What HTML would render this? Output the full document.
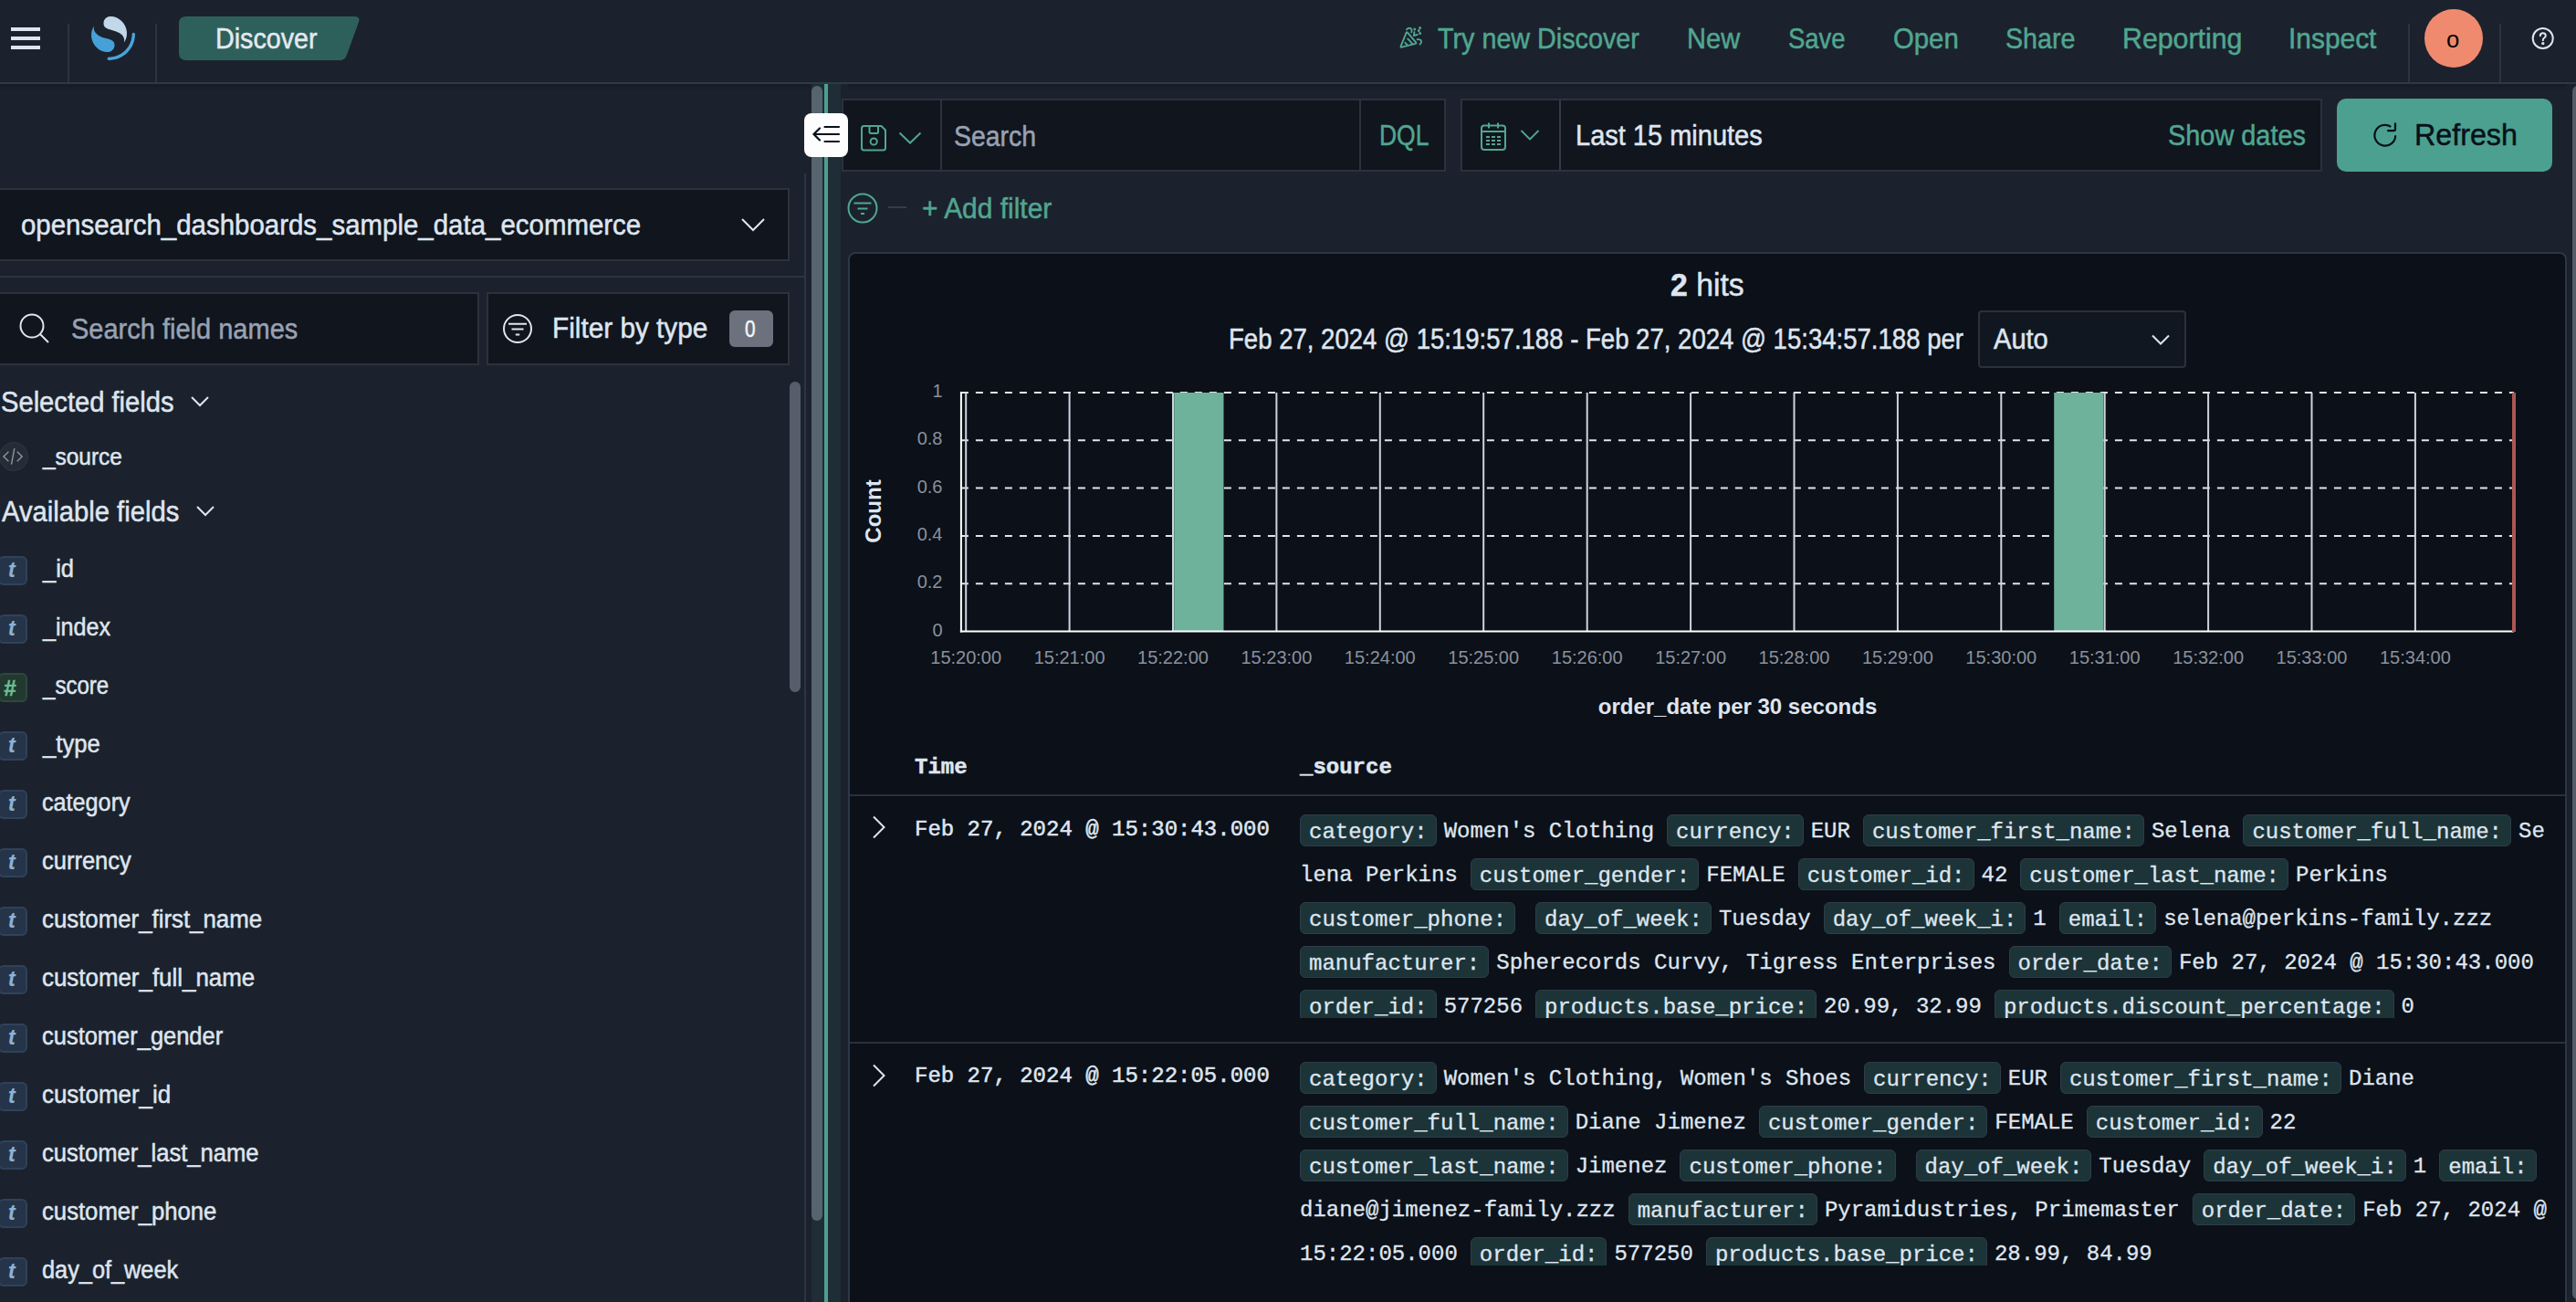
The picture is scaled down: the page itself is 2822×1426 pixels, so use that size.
<!DOCTYPE html>
<html><head><meta charset="utf-8"><title>Discover</title>
<style>
html,body{margin:0;padding:0;}
body{width:2822px;height:1426px;overflow:hidden;background:#1b222d;position:relative;font-family:"Liberation Sans",sans-serif;}
.a{position:absolute;}
.t{position:absolute;white-space:pre;line-height:1;transform-origin:0 0;-webkit-text-stroke:0.5px currentColor;}
svg{position:absolute;overflow:visible;}
.m{position:absolute;white-space:pre;font-family:"Liberation Mono",monospace;font-size:24px;line-height:48px;color:#dfe5ef;height:48px;-webkit-text-stroke:0.3px currentColor;}
.m b{font-weight:400;display:inline-block;background:#1c3438;border:1px solid #2e3c48;border-radius:6px;padding:0 9px;height:35px;box-sizing:border-box;line-height:37px;vertical-align:top;margin-top:5px;margin-right:8px;}
.m i{font-style:normal;margin-right:14px;}
</style></head><body>

<div class="a" style="left:0px;top:0px;width:2822px;height:90px;background:#1b222d;"></div>
<div class="a" style="left:0px;top:90px;width:2822px;height:2px;background:#2f3947;"></div>
<div class="a" style="left:0px;top:92px;width:2822px;height:8px;background:linear-gradient(rgba(0,0,0,0.18),rgba(0,0,0,0));"></div>
<div class="a" style="left:12px;top:30px;width:32px;height:4px;background:#dfe5ef;"></div>
<div class="a" style="left:12px;top:40px;width:32px;height:4px;background:#dfe5ef;"></div>
<div class="a" style="left:12px;top:50px;width:32px;height:4px;background:#dfe5ef;"></div>
<div class="a" style="left:74px;top:26px;width:2px;height:64px;background:#2b3544;"></div>
<div class="a" style="left:170px;top:26px;width:2px;height:64px;background:#2b3544;"></div>
<svg style="left:100px;top:18px" width="48" height="48" viewBox="0 0 64 64">
<path fill="#4aa3dc" d="M61.7374 23.5C60.4878 23.5 59.4748 24.513 59.4748 25.7626C59.4748 44.3813 44.3813 59.4748 25.7626 59.4748C24.513 59.4748 23.5 60.4878 23.5 61.7374C23.5 62.987 24.513 64 25.7626 64C46.8803 64 64 46.8803 64 25.7626C64 24.513 62.987 23.5 61.7374 23.5Z"/>
<path fill="#c2d8ea" d="M48.0814 38C50.2572 34.4505 52.3615 29.7178 51.9475 23.0921C51.0899 9.36725 38.6589 -1.04463 26.9206 0.0837327C22.3253 0.525465 17.6068 4.2712 18.026 10.9805C18.2082 13.8961 19.6352 15.6169 21.9544 16.9399C24.1618 18.1992 26.9978 18.9969 30.2128 19.9011C34.0962 20.9934 38.6009 22.2203 42.063 24.7717C46.2125 27.8295 49.0491 31.3743 48.0814 38Z"/>
<path fill="#47a0d8" d="M3.91861 14C1.74276 17.5495 -0.361506 22.2822 0.0524931 28.9079C0.910072 42.6327 13.3411 53.0446 25.0794 51.9163C29.6747 51.4745 34.3932 47.7288 33.974 41.0195C33.7918 38.1039 32.3647 36.3831 30.0456 35.0601C27.8382 33.8008 25.0022 33.0031 21.7872 32.0989C17.9038 31.0066 13.3991 29.7797 9.93694 27.2283C5.78746 24.1704 2.95092 20.6257 3.91861 14Z"/>
</svg>
<svg style="left:196px;top:18px" width="200" height="48" viewBox="0 0 200 48">
<path fill="#2e605b" d="M8 0 H192 Q199 0 197 6 L184 42 Q182 48 176 48 H8 Q0 48 0 40 V8 Q0 0 8 0Z"/>
</svg>
<div id="hdr_discover" class="t" style="left:236.0px;top:27px;font-size:31px;color:#e4e9f0;font-weight:400;font-family:'Liberation Sans',sans-serif;transform:scaleX(0.9246);">Discover</div>
<div id="hl0" class="t" style="left:1575.0px;top:27.299999999999997px;font-size:30.5px;color:#51a690;font-weight:400;font-family:'Liberation Sans',sans-serif;transform:scaleX(0.9422);">Try new Discover</div>
<div id="hl1" class="t" style="left:1848.0px;top:27.299999999999997px;font-size:30.5px;color:#51a690;font-weight:400;font-family:'Liberation Sans',sans-serif;transform:scaleX(0.9525);">New</div>
<div id="hl2" class="t" style="left:1959.0px;top:27.299999999999997px;font-size:30.5px;color:#51a690;font-weight:400;font-family:'Liberation Sans',sans-serif;transform:scaleX(0.8999);">Save</div>
<div id="hl3" class="t" style="left:2073.5px;top:27.299999999999997px;font-size:30.5px;color:#51a690;font-weight:400;font-family:'Liberation Sans',sans-serif;transform:scaleX(0.9610);">Open</div>
<div id="hl4" class="t" style="left:2197.0px;top:27.299999999999997px;font-size:30.5px;color:#51a690;font-weight:400;font-family:'Liberation Sans',sans-serif;transform:scaleX(0.9391);">Share</div>
<div id="hl5" class="t" style="left:2325.0px;top:27.299999999999997px;font-size:30.5px;color:#51a690;font-weight:400;font-family:'Liberation Sans',sans-serif;transform:scaleX(0.9934);">Reporting</div>
<div id="hl6" class="t" style="left:2506.5px;top:27.299999999999997px;font-size:30.5px;color:#51a690;font-weight:400;font-family:'Liberation Sans',sans-serif;transform:scaleX(0.9803);">Inspect</div>
<svg style="left:1530px;top:26px" width="32" height="32" viewBox="0 0 32 32" fill="none" stroke="#51a690" stroke-width="1.9" stroke-linecap="round" stroke-linejoin="round">
<path d="M10.7 9.6 L4.6 24.6 Q4.2 26 5.6 25.7 L20.6 21.9 Q22 21.4 21.1 20.4 L11.9 9.6 Q11.2 8.9 10.7 9.6Z"/>
<path d="M12.2 16.4 L17.4 22.2"/><path d="M9.4 20.8 L11.6 23.2"/>
<path d="M10.9 6.3 Q13.5 3.6 15.9 5.6 Q17.4 7.2 16.3 9.3"/>
<path d="M19.4 9.3 L18.8 13 L22.6 12"/>
<path d="M22.7 17.3 Q26.3 16.6 27 19.3 Q27.4 21.3 25.6 22.4"/>
<circle cx="19.7" cy="5.9" r="0.55" fill="#51a690"/><circle cx="25.6" cy="4.6" r="0.55" fill="#51a690"/><circle cx="24.3" cy="7.5" r="0.55" fill="#51a690"/><circle cx="25.6" cy="10.4" r="0.55" fill="#51a690"/>
</svg>
<div class="a" style="left:2638px;top:26px;width:2px;height:64px;background:#2b3544;"></div>
<div class="a" style="left:2738px;top:26px;width:2px;height:64px;background:#2b3544;"></div>
<div class="a" style="left:2656px;top:10px;width:64px;height:64px;border-radius:50%;background:#f08a6e"></div>
<div id="avatar_o" class="t" style="left:2680.4000000000015px;top:30px;font-size:26px;color:#000000;font-weight:400;font-family:'Liberation Sans',sans-serif;transform:scaleX(0.9895);-webkit-text-stroke:0;">o</div>
<svg style="left:2772px;top:28px" width="28" height="28" viewBox="0 0 28 28" fill="none" stroke="#dfe5ef" stroke-width="2">
<circle cx="13.7" cy="14" r="11"/><path d="M10.8 11.2 Q10.8 8.2 13.8 8.2 Q16.8 8.2 16.8 11 Q16.8 12.8 14.8 13.8 Q13.8 14.3 13.8 16.2" stroke-linecap="round"/>
<circle cx="13.8" cy="19.6" r="0.7" fill="#dfe5ef"/></svg>
<div class="a" style="left:-2px;top:206px;width:867px;height:80px;background:#10151e;border:2px solid #2b323c;box-sizing:border-box;"></div>
<div id="idx" class="t" style="left:23.0px;top:231px;font-size:31px;color:#dfe5ef;font-weight:400;font-family:'Liberation Sans',sans-serif;transform:scaleX(0.9497);">opensearch_dashboards_sample_data_ecommerce</div>
<svg style="left:810px;top:236px" width="30" height="20" viewBox="0 0 30 20" fill="none" stroke="#dfe5ef" stroke-width="2"><path d="M3 4 L15 16 L27 4"/></svg>
<div class="a" style="left:881px;top:190px;width:2px;height:1236px;background:#2b3544;"></div>
<div class="a" style="left:0px;top:302px;width:882px;height:2px;background:#2b3544;"></div>
<div class="a" style="left:-2px;top:320px;width:527px;height:80px;background:#10151e;border:2px solid #2b323c;box-sizing:border-box;"></div>
<svg style="left:20px;top:342px" width="36" height="36" viewBox="0 0 36 36" fill="none" stroke="#dfe5ef" stroke-width="2"><circle cx="15" cy="15" r="12.5"/><path d="M24 24 L33 33"/></svg>
<div id="sfn" class="t" style="left:78.0px;top:345px;font-size:31px;color:#98a2b3;font-weight:400;font-family:'Liberation Sans',sans-serif;transform:scaleX(0.9356);">Search field names</div>
<div class="a" style="left:533px;top:320px;width:332px;height:80px;background:#10151e;border:2px solid #2b323c;box-sizing:border-box;"></div>
<svg style="left:550px;top:343px" width="34" height="34" viewBox="0 0 34 34" fill="none" stroke="#dfe5ef" stroke-width="2"><circle cx="17" cy="17" r="15"/><path d="M7 11.8 H27 M10.5 17.4 H23.5 M14.8 23.4 H19.2"/></svg>
<div id="fbt" class="t" style="left:605.0px;top:344px;font-size:31px;color:#dfe5ef;font-weight:400;font-family:'Liberation Sans',sans-serif;transform:scaleX(0.9600);">Filter by type</div>
<div class="a" style="left:799px;top:340px;width:48px;height:40px;background:#6b727e;border-radius:6px;"></div>
<div id="zero" class="t" style="left:815.9999999999998px;top:347px;font-size:26px;color:#f4f6f9;font-weight:400;font-family:'Liberation Sans',sans-serif;transform:scaleX(0.8002);">0</div>
<div id="self" class="t" style="left:1.0px;top:425px;font-size:31px;color:#dfe5ef;font-weight:400;font-family:'Liberation Sans',sans-serif;transform:scaleX(0.9401);">Selected fields</div>
<svg style="left:207px;top:432px" width="24" height="16" viewBox="0 0 24 16" fill="none" stroke="#dfe5ef" stroke-width="2"><path d="M3 3 L12 12 L21 3"/></svg>
<div class="a" style="left:-1px;top:484px;width:32px;height:32px;border-radius:50%;background:#262c36;border:1px solid #303744;box-sizing:border-box"></div>
<svg style="left:0px;top:486px" width="30" height="28" viewBox="0 0 30 28" fill="none" stroke="#8c95a3" stroke-width="1.4"><path d="M9.4 8.8 L3.9 14 L9.4 19.2 M18.8 8.8 L24.2 14 L18.8 19.2 M15.8 5.2 L12.5 22.6"/></svg>
<div id="srcf" class="t" style="left:47.0px;top:487px;font-size:26px;color:#dfe5ef;font-weight:400;font-family:'Liberation Sans',sans-serif;transform:scaleX(0.9392);">_source</div>
<div id="avail" class="t" style="left:2.0px;top:545px;font-size:31px;color:#dfe5ef;font-weight:400;font-family:'Liberation Sans',sans-serif;transform:scaleX(0.9421);">Available fields</div>
<svg style="left:213px;top:552px" width="24" height="16" viewBox="0 0 24 16" fill="none" stroke="#dfe5ef" stroke-width="2"><path d="M3 3 L12 12 L21 3"/></svg>
<div class="a" style="left:-2px;top:609px;width:32px;height:32px;border-radius:6px;background:#253449;border:2px solid #2f425a;box-sizing:border-box"></div>
<div class="t" style="left:9px;top:613px;font-size:23px;font-weight:700;font-style:italic;color:#8cb2d6;-webkit-text-stroke:0.2px currentColor">t</div>
<div id="fld0" class="t" style="left:47.0px;top:610px;font-size:27px;color:#dfe5ef;font-weight:400;font-family:'Liberation Sans',sans-serif;transform:scaleX(0.9421);">_id</div>
<div class="a" style="left:-2px;top:673px;width:32px;height:32px;border-radius:6px;background:#253449;border:2px solid #2f425a;box-sizing:border-box"></div>
<div class="t" style="left:9px;top:677px;font-size:23px;font-weight:700;font-style:italic;color:#8cb2d6;-webkit-text-stroke:0.2px currentColor">t</div>
<div id="fld1" class="t" style="left:47.0px;top:674px;font-size:27px;color:#dfe5ef;font-weight:400;font-family:'Liberation Sans',sans-serif;transform:scaleX(0.9297);">_index</div>
<div class="a" style="left:-2px;top:737px;width:32px;height:32px;border-radius:6px;background:#22392f;border:2px solid #2c4a3c;box-sizing:border-box"></div>
<div class="t" style="left:4px;top:742px;font-size:24px;font-weight:700;font-style:italic;color:#6dbd94">#</div>
<div id="fld2" class="t" style="left:47.0px;top:738px;font-size:27px;color:#dfe5ef;font-weight:400;font-family:'Liberation Sans',sans-serif;transform:scaleX(0.8908);">_score</div>
<div class="a" style="left:-2px;top:801px;width:32px;height:32px;border-radius:6px;background:#253449;border:2px solid #2f425a;box-sizing:border-box"></div>
<div class="t" style="left:9px;top:805px;font-size:23px;font-weight:700;font-style:italic;color:#8cb2d6;-webkit-text-stroke:0.2px currentColor">t</div>
<div id="fld3" class="t" style="left:47.0px;top:802px;font-size:27px;color:#dfe5ef;font-weight:400;font-family:'Liberation Sans',sans-serif;transform:scaleX(0.9497);">_type</div>
<div class="a" style="left:-2px;top:865px;width:32px;height:32px;border-radius:6px;background:#253449;border:2px solid #2f425a;box-sizing:border-box"></div>
<div class="t" style="left:9px;top:869px;font-size:23px;font-weight:700;font-style:italic;color:#8cb2d6;-webkit-text-stroke:0.2px currentColor">t</div>
<div id="fld4" class="t" style="left:46.0px;top:866px;font-size:27px;color:#dfe5ef;font-weight:400;font-family:'Liberation Sans',sans-serif;transform:scaleX(0.9329);">category</div>
<div class="a" style="left:-2px;top:929px;width:32px;height:32px;border-radius:6px;background:#253449;border:2px solid #2f425a;box-sizing:border-box"></div>
<div class="t" style="left:9px;top:933px;font-size:23px;font-weight:700;font-style:italic;color:#8cb2d6;-webkit-text-stroke:0.2px currentColor">t</div>
<div id="fld5" class="t" style="left:46.0px;top:930px;font-size:27px;color:#dfe5ef;font-weight:400;font-family:'Liberation Sans',sans-serif;transform:scaleX(0.9441);">currency</div>
<div class="a" style="left:-2px;top:993px;width:32px;height:32px;border-radius:6px;background:#253449;border:2px solid #2f425a;box-sizing:border-box"></div>
<div class="t" style="left:9px;top:997px;font-size:23px;font-weight:700;font-style:italic;color:#8cb2d6;-webkit-text-stroke:0.2px currentColor">t</div>
<div id="fld6" class="t" style="left:46.0px;top:994px;font-size:27px;color:#dfe5ef;font-weight:400;font-family:'Liberation Sans',sans-serif;transform:scaleX(0.9560);">customer_first_name</div>
<div class="a" style="left:-2px;top:1057px;width:32px;height:32px;border-radius:6px;background:#253449;border:2px solid #2f425a;box-sizing:border-box"></div>
<div class="t" style="left:9px;top:1061px;font-size:23px;font-weight:700;font-style:italic;color:#8cb2d6;-webkit-text-stroke:0.2px currentColor">t</div>
<div id="fld7" class="t" style="left:46.0px;top:1058px;font-size:27px;color:#dfe5ef;font-weight:400;font-family:'Liberation Sans',sans-serif;transform:scaleX(0.9590);">customer_full_name</div>
<div class="a" style="left:-2px;top:1121px;width:32px;height:32px;border-radius:6px;background:#253449;border:2px solid #2f425a;box-sizing:border-box"></div>
<div class="t" style="left:9px;top:1125px;font-size:23px;font-weight:700;font-style:italic;color:#8cb2d6;-webkit-text-stroke:0.2px currentColor">t</div>
<div id="fld8" class="t" style="left:46.0px;top:1122px;font-size:27px;color:#dfe5ef;font-weight:400;font-family:'Liberation Sans',sans-serif;transform:scaleX(0.9431);">customer_gender</div>
<div class="a" style="left:-2px;top:1185px;width:32px;height:32px;border-radius:6px;background:#253449;border:2px solid #2f425a;box-sizing:border-box"></div>
<div class="t" style="left:9px;top:1189px;font-size:23px;font-weight:700;font-style:italic;color:#8cb2d6;-webkit-text-stroke:0.2px currentColor">t</div>
<div id="fld9" class="t" style="left:46.0px;top:1186px;font-size:27px;color:#dfe5ef;font-weight:400;font-family:'Liberation Sans',sans-serif;transform:scaleX(0.9598);">customer_id</div>
<div class="a" style="left:-2px;top:1249px;width:32px;height:32px;border-radius:6px;background:#253449;border:2px solid #2f425a;box-sizing:border-box"></div>
<div class="t" style="left:9px;top:1253px;font-size:23px;font-weight:700;font-style:italic;color:#8cb2d6;-webkit-text-stroke:0.2px currentColor">t</div>
<div id="fld10" class="t" style="left:46.0px;top:1250px;font-size:27px;color:#dfe5ef;font-weight:400;font-family:'Liberation Sans',sans-serif;transform:scaleX(0.9480);">customer_last_name</div>
<div class="a" style="left:-2px;top:1313px;width:32px;height:32px;border-radius:6px;background:#253449;border:2px solid #2f425a;box-sizing:border-box"></div>
<div class="t" style="left:9px;top:1317px;font-size:23px;font-weight:700;font-style:italic;color:#8cb2d6;-webkit-text-stroke:0.2px currentColor">t</div>
<div id="fld11" class="t" style="left:46.0px;top:1314px;font-size:27px;color:#dfe5ef;font-weight:400;font-family:'Liberation Sans',sans-serif;transform:scaleX(0.9516);">customer_phone</div>
<div class="a" style="left:-2px;top:1377px;width:32px;height:32px;border-radius:6px;background:#253449;border:2px solid #2f425a;box-sizing:border-box"></div>
<div class="t" style="left:9px;top:1381px;font-size:23px;font-weight:700;font-style:italic;color:#8cb2d6;-webkit-text-stroke:0.2px currentColor">t</div>
<div id="fld12" class="t" style="left:46.0px;top:1378px;font-size:27px;color:#dfe5ef;font-weight:400;font-family:'Liberation Sans',sans-serif;transform:scaleX(0.9375);">day_of_week</div>
<div class="a" style="left:-2px;top:1441px;width:32px;height:32px;border-radius:6px;background:#253449;border:2px solid #2f425a;box-sizing:border-box"></div>
<div class="t" style="left:9px;top:1445px;font-size:23px;font-weight:700;font-style:italic;color:#8cb2d6;-webkit-text-stroke:0.2px currentColor">t</div>
<div id="fld13" class="t" style="left:46px;top:1442px;font-size:27px;color:#dfe5ef;font-weight:400;font-family:'Liberation Sans',sans-serif;transform:scaleX(0.9419);">day_of_week_i</div>
<div class="a" style="left:865px;top:418px;width:12px;height:340px;background:#565d6b;border-radius:6px;"></div>
<div class="a" style="left:889px;top:92px;width:32px;height:1334px;background:#1e2d36;"></div>
<div class="a" style="left:889px;top:94px;width:12px;height:1243px;background:#55646e;border-radius:6px;"></div>
<div class="a" style="left:903px;top:92px;width:4px;height:1334px;background:#4ba08e;"></div>
<div class="a" style="left:921px;top:92px;width:8px;height:1334px;background:#1b222d;"></div>
<div class="a" style="left:881px;top:124px;width:48px;height:48px;border-radius:8px;background:#fdfdfe;z-index:5"></div>
<svg style="left:881px;top:124px;z-index:6" width="48" height="48" viewBox="0 0 48 48" fill="none" stroke="#07101a" stroke-width="2.2" stroke-linecap="round"><path d="M17 16.5 L10.5 23 L17 29.5 M10.5 23 H38 M22.5 15 H38 M22.5 31 H38"/></svg>
<div class="a" style="left:922px;top:108px;width:662px;height:80px;background:#10151e;border:2px solid #2b323c;box-sizing:border-box;"></div>
<div class="a" style="left:1030px;top:110px;width:2px;height:76px;background:#2b323c;"></div>
<div class="a" style="left:1489px;top:110px;width:2px;height:76px;background:#2b323c;"></div>
<svg style="left:940px;top:134px" width="34" height="34" viewBox="0 0 34 34" fill="none" stroke="#51a690" stroke-width="2" stroke-linejoin="round"><path d="M6.5 4 H25.5 L30 8.5 V28 Q30 30.5 27.5 30.5 H6.5 Q4 30.5 4 28 V6.5 Q4 4 6.5 4 Z"/><path d="M12.5 4 V10.5 Q12.5 12 14 12 H20.5 Q22 12 22 10.5 V4"/><circle cx="17.2" cy="21" r="3.6"/></svg>
<svg style="left:983px;top:142px" width="28" height="18" viewBox="0 0 28 18" fill="none" stroke="#51a690" stroke-width="2"><path d="M2.5 3.5 L14 14.5 L25.5 3.5"/></svg>
<div id="qsearch" class="t" style="left:1045.0px;top:134px;font-size:31px;color:#98a2b3;font-weight:400;font-family:'Liberation Sans',sans-serif;transform:scaleX(0.9167);">Search</div>
<div id="dql" class="t" style="left:1511.0px;top:132.5px;font-size:31px;color:#51a690;font-weight:400;font-family:'Liberation Sans',sans-serif;transform:scaleX(0.8538);">DQL</div>
<div class="a" style="left:1600px;top:108px;width:944px;height:80px;background:#10151e;border:2px solid #2b323c;box-sizing:border-box;"></div>
<div class="a" style="left:1708px;top:110px;width:2px;height:76px;background:#343b46;"></div>
<svg style="left:1620px;top:133px" width="32" height="34" viewBox="0 0 32 34" fill="none" stroke="#51a690" stroke-width="2"><rect x="3" y="4.5" width="26" height="26.5" rx="3"/><path d="M3 11 H29 M11 1.5 V7.5 M21 1.5 V7.5"/><path d="M8 17 H12 M14 17 H18 M20 17 H24 M8 21 H12 M14 21 H18 M20 21 H24 M8 25 H12 M14 25 H18 M20 25 H24" stroke-width="2"/></svg>
<svg style="left:1664px;top:140px" width="24" height="16" viewBox="0 0 24 16" fill="none" stroke="#51a690" stroke-width="1.8" stroke-linejoin="round" stroke-linecap="round"><path d="M3 3.5 L12 12.5 L21 3.5"/></svg>
<div id="last15" class="t" style="left:1726.0px;top:132.5px;font-size:31px;color:#dfe5ef;font-weight:400;font-family:'Liberation Sans',sans-serif;transform:scaleX(0.9355);">Last 15 minutes</div>
<div id="showdates" class="t" style="left:2374.5px;top:132.5px;font-size:31px;color:#51a690;font-weight:400;font-family:'Liberation Sans',sans-serif;transform:scaleX(0.9317);">Show dates</div>
<div class="a" style="left:2560px;top:108px;width:236px;height:80px;background:#4ca08f;border-radius:10px;"></div>
<svg style="left:2598px;top:132px" width="30" height="30" viewBox="0 0 30 30" fill="none" stroke="#07101a" stroke-width="2.2"><path d="M21.3 6.9 A11.4 11.4 0 1 0 26.2 16.2"/><path d="M26 2.4 V9.6 Q26 11.2 24.4 11.2 H17.2"/></svg>
<div id="refresh" class="t" style="left:2645.0px;top:129.5px;font-size:34px;color:#07101a;font-weight:400;font-family:'Liberation Sans',sans-serif;transform:scaleX(0.9483);">Refresh</div>
<svg style="left:927px;top:210px" width="36" height="36" viewBox="0 0 36 36" fill="none" stroke="#51a690" stroke-width="2"><circle cx="18" cy="18" r="15.5"/><path d="M8.5 12.5 H27.5 M12.5 18.5 H23.5 M16 24 H20"/></svg>
<div class="a" style="left:973px;top:226px;width:20px;height:2px;background:#343e4c;"></div>
<div id="addfilter" class="t" style="left:1010.0px;top:213px;font-size:31px;color:#51a690;font-weight:400;font-family:'Liberation Sans',sans-serif;transform:scaleX(0.9659);">+ Add filter</div>
<div class="a" style="left:929px;top:276px;width:1883px;height:1160px;background:#0b1019;border:2px solid #2c3747;border-radius:8px;box-sizing:border-box;"></div>
<div class="a" style="left:2812px;top:92px;width:10px;height:1334px;background:#1b222d;"></div>
<div class="a" style="left:2818px;top:94px;width:12px;height:1329px;background:#565d6a;border-radius:6px;"></div>
<div id="hits" class="t" style="left:1830.0px;top:294px;font-size:35px;color:#dfe5ef;font-weight:400;font-family:'Liberation Sans',sans-serif;transform:scaleX(0.9642);"><b>2</b> hits</div>
<div id="range" class="t" style="left:1345.5px;top:355.5px;font-size:31px;color:#dfe5ef;font-weight:400;font-family:'Liberation Sans',sans-serif;transform:scaleX(0.8887);">Feb 27, 2024 @ 15:19:57.188 - Feb 27, 2024 @ 15:34:57.188 per</div>
<div class="a" style="left:2167px;top:340px;width:228px;height:63px;background:#111721;border:2px solid #2a313c;border-radius:4px;box-sizing:border-box;"></div>
<div id="auto" class="t" style="left:2184.0px;top:355.5px;font-size:31px;color:#dfe5ef;font-weight:400;font-family:'Liberation Sans',sans-serif;transform:scaleX(0.9375);">Auto</div>
<svg style="left:2355px;top:363px" width="24" height="18" viewBox="0 0 24 18" fill="none" stroke="#dfe5ef" stroke-width="2"><path d="M3 4.5 L12 13.5 L21 4.5"/></svg>
<svg style="left:0;top:0" width="2822" height="1426" viewBox="0 0 2822 1426">
<line x1="1052.9" y1="430.0" x2="2754.0" y2="430.0" stroke="#dfe5ee" stroke-width="2" stroke-dasharray="8 8"/>
<line x1="1052.9" y1="482.3" x2="2754.0" y2="482.3" stroke="#dfe5ee" stroke-width="2" stroke-dasharray="8 8"/>
<line x1="1052.9" y1="534.6" x2="2754.0" y2="534.6" stroke="#dfe5ee" stroke-width="2" stroke-dasharray="8 8"/>
<line x1="1052.9" y1="586.9" x2="2754.0" y2="586.9" stroke="#dfe5ee" stroke-width="2" stroke-dasharray="8 8"/>
<line x1="1052.9" y1="639.2" x2="2754.0" y2="639.2" stroke="#dfe5ee" stroke-width="2" stroke-dasharray="8 8"/>
<line x1="1058.2" y1="430" x2="1058.2" y2="691" stroke="#cdd4df" stroke-width="2"/>
<line x1="1171.6" y1="430" x2="1171.6" y2="691" stroke="#cdd4df" stroke-width="2"/>
<line x1="1285.0" y1="430" x2="1285.0" y2="691" stroke="#cdd4df" stroke-width="2"/>
<line x1="1398.4" y1="430" x2="1398.4" y2="691" stroke="#cdd4df" stroke-width="2"/>
<line x1="1511.8" y1="430" x2="1511.8" y2="691" stroke="#cdd4df" stroke-width="2"/>
<line x1="1625.2" y1="430" x2="1625.2" y2="691" stroke="#cdd4df" stroke-width="2"/>
<line x1="1738.7" y1="430" x2="1738.7" y2="691" stroke="#cdd4df" stroke-width="2"/>
<line x1="1852.1" y1="430" x2="1852.1" y2="691" stroke="#cdd4df" stroke-width="2"/>
<line x1="1965.5" y1="430" x2="1965.5" y2="691" stroke="#cdd4df" stroke-width="2"/>
<line x1="2078.9" y1="430" x2="2078.9" y2="691" stroke="#cdd4df" stroke-width="2"/>
<line x1="2192.3" y1="430" x2="2192.3" y2="691" stroke="#cdd4df" stroke-width="2"/>
<line x1="2305.7" y1="430" x2="2305.7" y2="691" stroke="#cdd4df" stroke-width="2"/>
<line x1="2419.1" y1="430" x2="2419.1" y2="691" stroke="#cdd4df" stroke-width="2"/>
<line x1="2532.5" y1="430" x2="2532.5" y2="691" stroke="#cdd4df" stroke-width="2"/>
<line x1="2645.9" y1="430" x2="2645.9" y2="691" stroke="#cdd4df" stroke-width="2"/>
<rect x="1286.2" y="430" width="54.3" height="261.5" fill="#6fb29b"/>
<rect x="2250.2" y="430" width="54.3" height="261.5" fill="#6fb29b"/>
<line x1="1052.9" y1="429" x2="1052.9" y2="692.5" stroke="#ffffff" stroke-width="2"/>
<line x1="1051.9" y1="691.5" x2="2754.0" y2="691.5" stroke="#ffffff" stroke-width="2"/>
<line x1="2754.0" y1="430" x2="2754.0" y2="692" stroke="#ad5652" stroke-width="4"/>
<text x="1032.5" y="435.0" text-anchor="end" font-family="Liberation Sans" font-size="20" fill="#8a919c">1</text>
<text x="1032.5" y="487.3" text-anchor="end" font-family="Liberation Sans" font-size="20" fill="#8a919c">0.8</text>
<text x="1032.5" y="539.6" text-anchor="end" font-family="Liberation Sans" font-size="20" fill="#8a919c">0.6</text>
<text x="1032.5" y="591.9" text-anchor="end" font-family="Liberation Sans" font-size="20" fill="#8a919c">0.4</text>
<text x="1032.5" y="644.2" text-anchor="end" font-family="Liberation Sans" font-size="20" fill="#8a919c">0.2</text>
<text x="1032.5" y="696.5" text-anchor="end" font-family="Liberation Sans" font-size="20" fill="#8a919c">0</text>
<text x="1058.2" y="727" text-anchor="middle" font-family="Liberation Sans" font-size="20" fill="#8a919c">15:20:00</text>
<text x="1171.6" y="727" text-anchor="middle" font-family="Liberation Sans" font-size="20" fill="#8a919c">15:21:00</text>
<text x="1285.0" y="727" text-anchor="middle" font-family="Liberation Sans" font-size="20" fill="#8a919c">15:22:00</text>
<text x="1398.4" y="727" text-anchor="middle" font-family="Liberation Sans" font-size="20" fill="#8a919c">15:23:00</text>
<text x="1511.8" y="727" text-anchor="middle" font-family="Liberation Sans" font-size="20" fill="#8a919c">15:24:00</text>
<text x="1625.2" y="727" text-anchor="middle" font-family="Liberation Sans" font-size="20" fill="#8a919c">15:25:00</text>
<text x="1738.7" y="727" text-anchor="middle" font-family="Liberation Sans" font-size="20" fill="#8a919c">15:26:00</text>
<text x="1852.1" y="727" text-anchor="middle" font-family="Liberation Sans" font-size="20" fill="#8a919c">15:27:00</text>
<text x="1965.5" y="727" text-anchor="middle" font-family="Liberation Sans" font-size="20" fill="#8a919c">15:28:00</text>
<text x="2078.9" y="727" text-anchor="middle" font-family="Liberation Sans" font-size="20" fill="#8a919c">15:29:00</text>
<text x="2192.3" y="727" text-anchor="middle" font-family="Liberation Sans" font-size="20" fill="#8a919c">15:30:00</text>
<text x="2305.7" y="727" text-anchor="middle" font-family="Liberation Sans" font-size="20" fill="#8a919c">15:31:00</text>
<text x="2419.1" y="727" text-anchor="middle" font-family="Liberation Sans" font-size="20" fill="#8a919c">15:32:00</text>
<text x="2532.5" y="727" text-anchor="middle" font-family="Liberation Sans" font-size="20" fill="#8a919c">15:33:00</text>
<text x="2645.9" y="727" text-anchor="middle" font-family="Liberation Sans" font-size="20" fill="#8a919c">15:34:00</text>
<text x="0" y="0" transform="translate(964.5,560) rotate(-90)" text-anchor="middle" font-family="Liberation Sans" font-size="24" font-weight="700" fill="#dfe5ef">Count</text>
<text x="1903.5" y="782" text-anchor="middle" font-family="Liberation Sans" font-size="24" font-weight="700" fill="#dfe5ef">order_date per 30 seconds</text>
</svg>
<div id="th_time" class="t" style="left:1002px;top:828.5px;font-size:24px;color:#dfe5ef;font-weight:700;font-family:'Liberation Mono',monospace;">Time</div>
<div id="th_src" class="t" style="left:1424px;top:828.5px;font-size:24px;color:#dfe5ef;font-weight:700;font-family:'Liberation Mono',monospace;">_source</div>
<div class="a" style="left:931px;top:870px;width:1880px;height:2px;background:#2a313c;"></div>
<div class="a" style="left:931px;top:1141px;width:1880px;height:2px;background:#2a313c;"></div>
<svg style="left:952px;top:892px" width="22" height="28" viewBox="0 0 22 28" fill="none" stroke="#dfe5ef" stroke-width="2"><path d="M5 2.5 L16.5 14 L5 25.5"/></svg>
<svg style="left:952px;top:1163.5px" width="22" height="28" viewBox="0 0 22 28" fill="none" stroke="#dfe5ef" stroke-width="2"><path d="M5 2.5 L16.5 14 L5 25.5"/></svg>
<div id="d1" class="t" style="left:1002px;top:896.5px;font-size:24px;color:#dfe5ef;font-weight:400;font-family:'Liberation Mono',monospace;">Feb 27, 2024 @ 15:30:43.000</div>
<div id="d2" class="t" style="left:1002px;top:1166.5px;font-size:24px;color:#dfe5ef;font-weight:400;font-family:'Liberation Mono',monospace;">Feb 27, 2024 @ 15:22:05.000</div>
<div class="a" style="left:1424px;top:885px;width:1390px;height:230px;overflow:hidden">
<div class="m" style="left:0;top:2px"><b>category:</b><i>Women's Clothing</i><b>currency:</b><i>EUR</i><b>customer_first_name:</b><i>Selena</i><b>customer_full_name:</b>Se</div>
<div class="m" style="left:0;top:50px"><i>lena Perkins</i><b>customer_gender:</b><i>FEMALE</i><b>customer_id:</b><i>42</i><b>customer_last_name:</b><i>Perkins</i></div>
<div class="m" style="left:0;top:98px"><b>customer_phone:</b><i></i><b>day_of_week:</b><i>Tuesday</i><b>day_of_week_i:</b><i>1</i><b>email:</b><i>selena@perkins-family.zzz</i></div>
<div class="m" style="left:0;top:146px"><b>manufacturer:</b><i>Spherecords Curvy, Tigress Enterprises</i><b>order_date:</b><i>Feb 27, 2024 @ 15:30:43.000</i></div>
<div class="m" style="left:0;top:194px"><b>order_id:</b><i>577256</i><b>products.base_price:</b><i>20.99, 32.99</i><b>products.discount_percentage:</b><i>0</i></div>
</div>
<div class="a" style="left:1424px;top:1156px;width:1390px;height:230px;overflow:hidden">
<div class="m" style="left:0;top:2px"><b>category:</b><i>Women's Clothing, Women's Shoes</i><b>currency:</b><i>EUR</i><b>customer_first_name:</b><i>Diane</i></div>
<div class="m" style="left:0;top:50px"><b>customer_full_name:</b><i>Diane Jimenez</i><b>customer_gender:</b><i>FEMALE</i><b>customer_id:</b><i>22</i></div>
<div class="m" style="left:0;top:98px"><b>customer_last_name:</b><i>Jimenez</i><b>customer_phone:</b><i></i><b>day_of_week:</b><i>Tuesday</i><b>day_of_week_i:</b><i>1</i><b>email:</b></div>
<div class="m" style="left:0;top:146px"><i>diane@jimenez-family.zzz</i><b>manufacturer:</b><i>Pyramidustries, Primemaster</i><b>order_date:</b>Feb 27, 2024 @</div>
<div class="m" style="left:0;top:194px"><i>15:22:05.000</i><b>order_id:</b><i>577250</i><b>products.base_price:</b><i>28.99, 84.99</i></div>
</div>
</body></html>
